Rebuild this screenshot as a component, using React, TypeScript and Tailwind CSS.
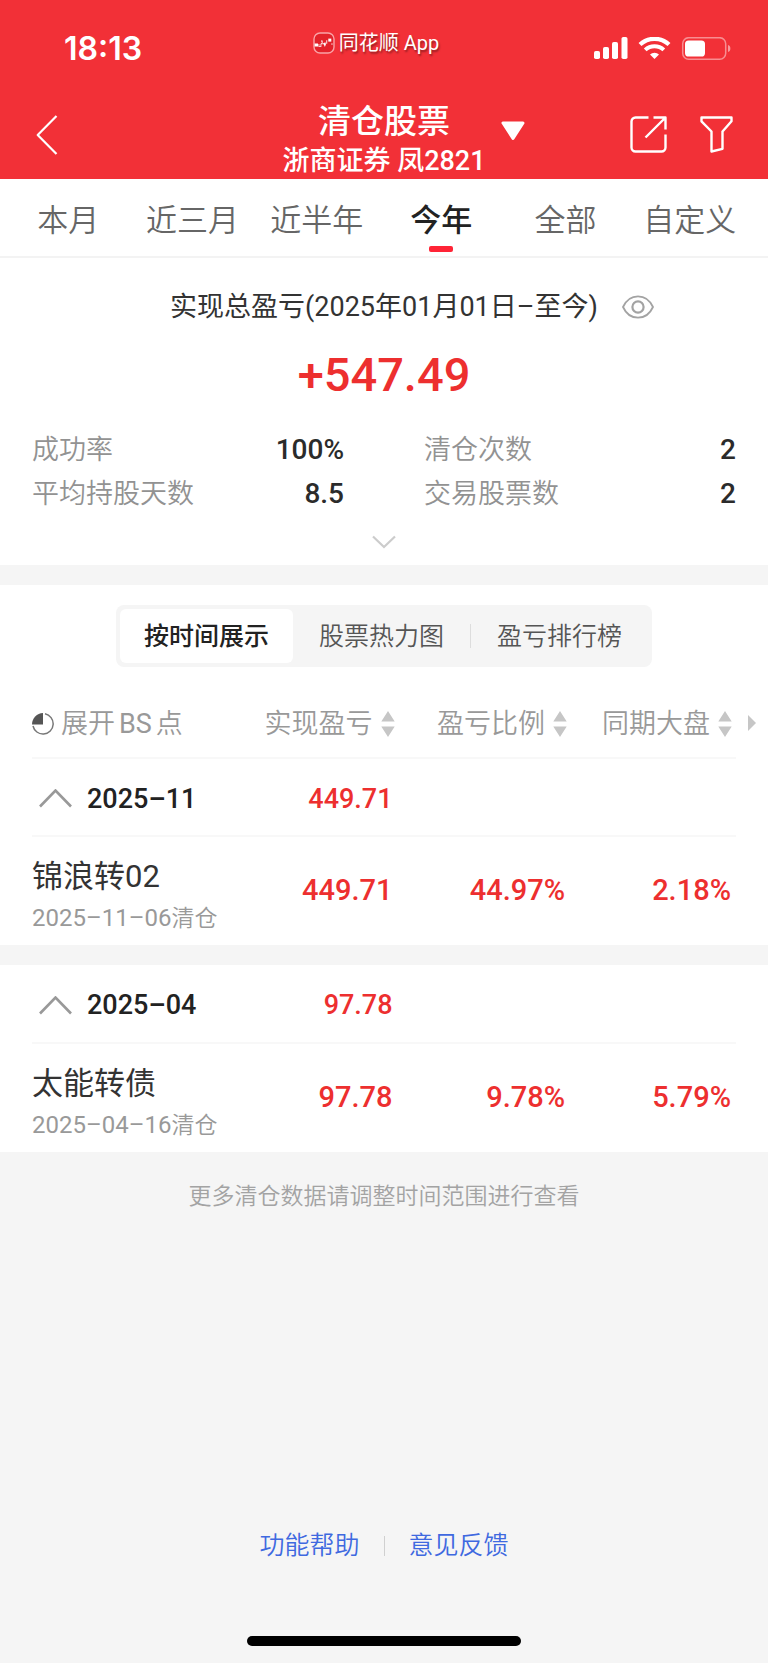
import { useState } from "react";

type Holding = { name: string; date: string; profit: string; ratio: string; market: string };
type Group = { month: string; total: string; holdings: Holding[] };

const ranges = ["本月", "近三月", "近半年", "今年", "全部", "自定义"];

const views = ["按时间展示", "股票热力图", "盈亏排行榜"];

const columns = ["实现盈亏", "盈亏比例", "同期大盘"];

const stats = [
  { label: "成功率", value: "100%" },
  { label: "清仓次数", value: "2" },
  { label: "平均持股天数", value: "8.5" },
  { label: "交易股票数", value: "2" },
];

const groups: Group[] = [
  {
    month: "2025–11",
    total: "449.71",
    holdings: [
      { name: "锦浪转02", date: "2025–11–06", profit: "449.71", ratio: "44.97%", market: "2.18%" },
    ],
  },
  {
    month: "2025–04",
    total: "97.78",
    holdings: [
      { name: "太能转债", date: "2025–04–16", profit: "97.78", ratio: "9.78%", market: "5.79%" },
    ],
  },
];

function AppLogo() {
  return (
    <svg width="22" height="22" viewBox="0 0 22 22" aria-hidden="true">
      <rect x="1" y="1" width="20" height="20" rx="6" fill="#e3222a" stroke="#f9a3a6" strokeWidth="1.4" />
      <g fill="#fff">
        <rect x="1.6" y="11.5" width="3.4" height="3" />
        <path d="M5.4 12h1v2h1v-2h1v3h-3z" opacity=".8" />
        <path d="M8 8.6h1.6v3.6H7.8v-.9h.9V9.500H8z" />
        <path d="m9.600 11 1.500.3 1-1.300.9 1.900-1.100 3-.9-1.800z" />
        <path d="M13.300 8.200h.9v3.500h-.9z" />
        <rect x="15.300" y="6.600" width="3" height="3" />
        <rect x="18.300" y="11.400" width="1.300" height="1.300" opacity=".8" />
      </g>
    </svg>
  );
}

function StatusIcons() {
  return (
    <svg width="138" height="24" viewBox="0 0 138 24" fill="#fff" aria-hidden="true">
      <rect x="0" y="14" width="6" height="8" rx="1.800" />
      <rect x="9" y="10" width="6" height="12" rx="1.800" />
      <rect x="18" y="5" width="6" height="17" rx="1.800" />
      <rect x="27.500" y="0" width="6" height="22" rx="1.800" />
      <g fill="none" stroke="#fff">
        <path d="M46 7.600a21 21 0 0 1 29 0" strokeWidth="4.200" />
        <path d="M51.200 12.900a13.600 13.600 0 0 1 18.600 0" strokeWidth="4" />
      </g>
      <path d="M60.500 22 56 17.500a6.600 6.600 0 0 1 9 0z" />
      <rect x="88.700" y=".7" width="43" height="21.600" rx="6" fill="none" stroke="#fff" strokeOpacity=".45" strokeWidth="1.500" />
      <path d="M134 8c3.200.8 3.200 6.200 0 7z" fillOpacity=".5" />
      <rect x="91" y="3.500" width="20" height="16" rx="3.600" />
    </svg>
  );
}

function BackIcon() {
  return (
    <svg width="22" height="40" viewBox="0 0 22 40" fill="none" stroke="#fff" strokeWidth="2.200" strokeLinejoin="round" aria-hidden="true">
      <path d="M20.500 1 1.700 20l18.800 19" />
    </svg>
  );
}

function ShareIcon() {
  return (
    <svg width="37" height="37" viewBox="0 0 37 37" fill="none" stroke="#fff" strokeWidth="2.400" strokeLinejoin="round" aria-hidden="true">
      <path d="M18.500 1.500h-13a4 4 0 0 0-4 4v26a4 4 0 0 0 4 4h26a4 4 0 0 0 4-4V18.500" />
      <path d="M23.500 1.500h12v12M35 2 15.500 21.500" />
    </svg>
  );
}

function FilterIcon() {
  return (
    <svg width="33" height="37" viewBox="0 0 33 37" fill="none" stroke="#fff" strokeWidth="2.400" strokeLinejoin="round" aria-hidden="true">
      <path d="M1.500 1.500h30v3.800l-9 10.200v17.300l-11 2.700v-20l-10-10.200z" />
    </svg>
  );
}

function EyeIcon() {
  return (
    <svg width="32" height="24" viewBox="0 0 32 24" fill="none" stroke="#a3a3a3" strokeWidth="1.800" aria-hidden="true">
      <path d="M1 12C4 5.500 9.500 1.300 16 1.300S28 5.500 31 12c-3 6.500-8.500 10.700-15 10.700S4 18.500 1 12z" strokeLinejoin="round" />
      <circle cx="16" cy="12" r="5.600" strokeWidth="2.200" />
    </svg>
  );
}

function PieIcon() {
  return (
    <svg width="22" height="24" viewBox="0 0 22 24" aria-hidden="true">
      <path d="M13 1.800A10.200 10.200 0 1 1 1 14" fill="none" stroke="#777" strokeWidth="1.500" />
      <path d="M11 12.500H0A11.500 11.500 0 0 1 11 1z" fill="#555" />
    </svg>
  );
}

function SortIcon() {
  return (
    <svg width="14" height="26" viewBox="0 0 14 26" fill="#c6c6c6" aria-hidden="true">
      <path d="M7 0l6.700 10.500H.3zM7 26 .3 15.500h13.400z" />
    </svg>
  );
}

function Header() {
  return (
    <header className="bg-[#f23037] text-white">
      <div className="grid h-[98px] grid-cols-[1fr_auto_1fr] items-center px-9">
        <time className="pl-7 font-[Inter,sans-serif] text-[32px] font-semibold leading-8">18:13</time>
        <div className="mb-3 mr-4 flex items-center gap-1 text-[20px] leading-6 [text-shadow:1px_2px_2px_#0006]">
          <AppLogo />
          <span>同花顺 App</span>
        </div>
        <div className="flex justify-end">
          <StatusIcons />
        </div>
      </div>
      <nav className="grid h-[81px] grid-cols-[1fr_auto_1fr] items-center px-9">
        <button type="button" aria-label="返回" className="w-10 pb-2">
          <BackIcon />
        </button>
        <div className="pt-0.5 text-center font-medium">
          <h1 className="text-[33px] leading-[42px]">清仓股票</h1>
          <p className="text-[27px] leading-9">浙商证券 凤2821</p>
        </div>
        <div className="flex items-center pb-2 pl-[14px]">
          <button type="button" aria-label="切换账户" className="pb-2">
            <svg width="26" height="20" viewBox="0 0 26 20" fill="#fff" stroke="#fff" strokeWidth="3" strokeLinejoin="round" aria-hidden="true">
              <path d="M3 2h20l-10 15.500z" />
            </svg>
          </button>
          <div className="-mr-px ml-auto flex gap-[33px]">
            <button type="button" aria-label="分享">
              <ShareIcon />
            </button>
            <button type="button" aria-label="筛选">
              <FilterIcon />
            </button>
          </div>
        </div>
      </nav>
    </header>
  );
}

function RangeTabs() {
  const [active, setActive] = useState("今年");
  return (
    <div role="tablist" className="grid h-[79px] grid-cols-6 border-b-2 border-[#f3f3f3] bg-white pl-1.5 pr-4">
      {ranges.map((range) => {
        const selected = range === active;
        return (
          <button
            key={range}
            type="button"
            role="tab"
            aria-selected={selected}
            onClick={() => setActive(range)}
            className={`flex flex-col items-center justify-end gap-1 whitespace-nowrap pb-1 text-[31px] leading-[42px] ${
              selected ? "font-medium text-[#222]" : "font-[350] text-[#666]"
            }`}
          >
            {range}
            <span className={`h-[6px] w-6 rounded-[2px] ${selected ? "bg-[#ff2436]" : ""}`} />
          </button>
        );
      })}
    </div>
  );
}

function Summary() {
  return (
    <section className="bg-white px-8 pb-[18px] pt-[29px]">
      <div className="flex items-center justify-center gap-6 pl-[56px] text-[27px] leading-10 text-[#333]">
        <h2 className="font-normal">实现总盈亏(2025年01月01日–至今)</h2>
        <button type="button" aria-label="隐藏金额">
          <EyeIcon />
        </button>
      </div>
      <p className="pt-[18px] text-center text-[47px] font-medium leading-[60px] text-[#ed2f2f]">+547.49</p>
      <dl className="grid grid-cols-2 gap-x-20 pt-[23px]">
        {stats.map((stat) => (
          <div key={stat.label} className="flex justify-between text-[27px] leading-[44px]">
            <dt className="font-[350] text-[#929292]">{stat.label}</dt>
            <dd className="text-[28px] font-medium text-[#2b2b2b]">{stat.value}</dd>
          </div>
        ))}
      </dl>
      <button type="button" aria-label="展开更多" className="mx-auto mt-5 flex h-[11px] items-center">
        <svg width="24" height="14" viewBox="0 0 24 14" fill="none" stroke="#ccc" strokeWidth="2.200" aria-hidden="true">
          <path d="m1 1.500 11 10.500 11-10.500" />
        </svg>
      </button>
    </section>
  );
}

function ViewSwitch() {
  const [active, setActive] = useState(0);
  return (
    <div className="flex justify-center pt-5">
      <div className="flex items-center rounded-lg bg-[#f5f5f5] p-1">
        {views.map((view, i) => (
          <div key={view} className="flex items-center">
            {i === 2 && <span className="h-6 w-px bg-[#ddd]" />}
            <button
              type="button"
              aria-pressed={i === active}
              onClick={() => setActive(i)}
              className={`h-[54px] rounded-md pt-0.5 text-[25px] ${i === 0 ? "px-6" : "px-[26px]"} ${
                i === active ? "bg-white font-medium text-[#222]" : "font-[350] text-[#555]"
              }`}
            >
              {view}
            </button>
          </div>
        ))}
      </div>
    </div>
  );
}

function GroupTable({ group, withHeader }: { group: Group; withHeader?: boolean }) {
  const [open, setOpen] = useState(true);
  return (
    <table aria-label={group.month} className="w-full table-fixed">
      <colgroup>
        <col className="w-[27%]" />
        <col className="w-[24.5%]" />
        <col className="w-[24.5%]" />
        <col className="w-[24%]" />
      </colgroup>
      {withHeader && (
        <thead className="text-[27px] text-[#999]">
          <tr className="h-[91px] border-b-2 border-[#f8f8f8]">
            <th scope="col" className="pt-6 text-left font-[350]">
              <button type="button" className="flex items-center gap-[7px] whitespace-nowrap">
                <PieIcon />
                <span>
                  展开<span className="mx-1 font-normal">BS</span>点
                </span>
              </button>
            </th>
            {columns.map((column, i) => (
              <th key={column} scope="col" className={`pt-6 font-[350] ${i === 2 ? "pr-1" : ""}`}>
                <button type="button" className="ml-auto flex items-center gap-2 whitespace-nowrap">
                  {column}
                  <SortIcon />
                </button>
              </th>
            ))}
          </tr>
        </thead>
      )}
      <tbody className="font-medium text-[#ed2f2f]">
        <tr className="h-[78px] border-b-2 border-[#f8f8f8] text-[27px]">
          <th scope="rowgroup" className="pt-1 text-left font-medium text-[#222]">
            <button
              type="button"
              aria-expanded={open}
              onClick={() => setOpen(!open)}
              className="flex items-center gap-[15px] whitespace-nowrap pl-[7px]"
            >
              <svg width="33" height="20" viewBox="0 0 33 20" fill="none" stroke="#999" strokeWidth="2.600" aria-hidden="true">
                <path d="M1 17.500 16.500 1.500 32 17.500" />
              </svg>
              {group.month}
            </button>
          </th>
          <td className="pr-[2px] pt-1 text-right">{group.total}</td>
          <td />
          <td />
        </tr>
        {open &&
          group.holdings.map((holding) => (
            <tr key={holding.name} className="h-[109px] text-[29px]">
              <th scope="row" className="whitespace-nowrap pt-2 text-left text-[31px] font-normal leading-[46px] text-[#333]">
                {holding.name}
                <span className="block text-[24px] leading-9 text-[#999]">
                  {holding.date}
                  <span className="text-[23px] font-[350]">清仓</span>
                </span>
              </th>
              <td className="pr-[2px] text-right">{holding.profit}</td>
              <td className="pr-[2px] text-right">{holding.ratio}</td>
              <td className="pr-[5px] text-right">{holding.market}</td>
            </tr>
          ))}
      </tbody>
    </table>
  );
}

export default function App() {
  return (
    <div className="flex min-h-screen flex-col bg-[#f5f5f5] font-[Roboto,'Noto_Sans_CJK_SC',sans-serif]">
      <Header />
      <main className="flex flex-col gap-5">
        <div>
          <RangeTabs />
          <Summary />
        </div>
        <section className="bg-white">
          <ViewSwitch />
          <div className="relative px-8">
            <GroupTable group={groups[0]} withHeader />
            <svg className="absolute right-3 top-12" width="8" height="16" viewBox="0 0 8 16" fill="#c6c6c6" aria-hidden="true">
              <path d="M0 0l8 8-8 8z" />
            </svg>
          </div>
        </section>
        <section className="bg-white px-8">
          <GroupTable group={groups[1]} />
        </section>
      </main>
      <p className="pt-7 text-center text-[23px] font-[350] leading-[34px] text-[#a3a3a3]">更多清仓数据请调整时间范围进行查看</p>
      <footer className="mt-auto flex flex-col items-center pb-[17px]">
        <div className="flex items-center gap-6 text-[25px] font-[350] leading-10 text-[#3f69e0]">
          <a href="#help">功能帮助</a>
          <span className="h-5 w-px bg-[#d0d0d0]" />
          <a href="#feedback">意见反馈</a>
        </div>
        <div className="mt-[70px] h-[10px] w-[274px] rounded-full bg-black" />
      </footer>
    </div>
  );
}
